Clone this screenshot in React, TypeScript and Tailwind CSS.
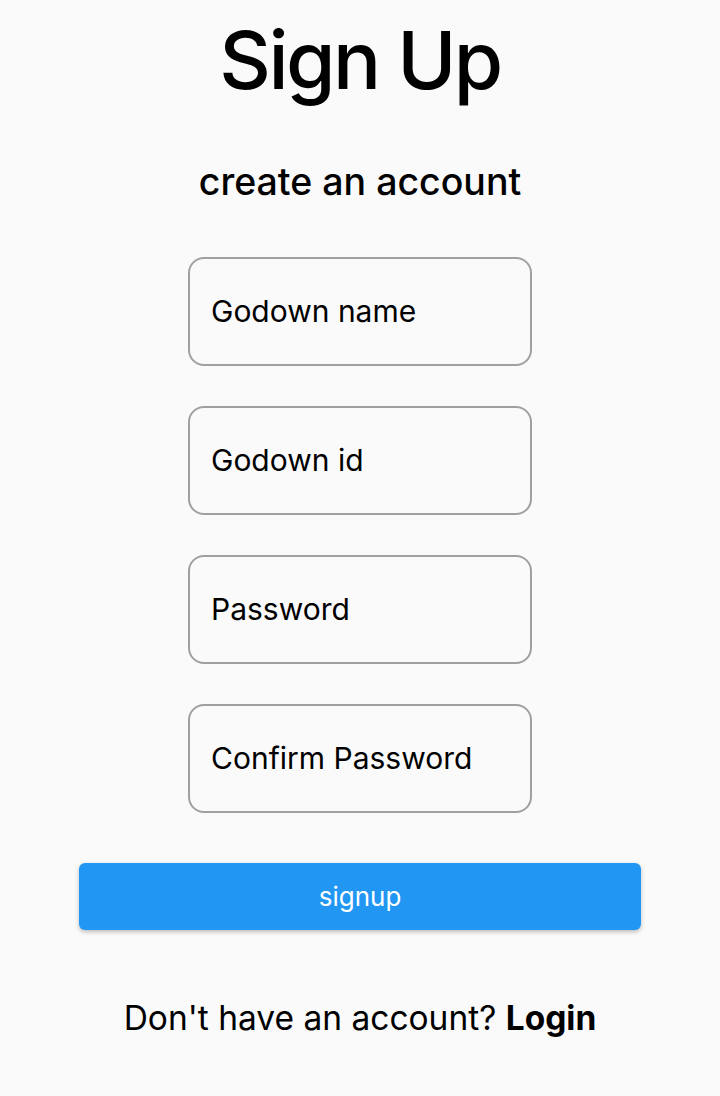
import React from "react";

const fields = ["Godown name", "Godown id", "Password", "Confirm Password"];

export default function App() {
  return (
    <div
      className="w-[720px] h-[1096px] bg-[#fafafa] flex flex-col items-center text-black"
      style={{ fontFamily: "Inter, 'Noto Sans', sans-serif" }}
    >
      <h1 className="mt-[12px] text-[80px] leading-[96px] font-[450] tracking-[-2.6px]">Sign Up</h1>
      <h2 className="mt-[52px] text-[37.5px] leading-[44px] font-medium">create an account</h2>
      <div className="mt-[53px] flex flex-col gap-[40px]">
        {fields.map((f) => (
          <div
            key={f}
            className="w-[344px] h-[109px] border-2 border-[#a0a0a0] rounded-[16px] flex items-center pl-[21px] text-[30px]"
          >
            {f}
          </div>
        ))}
      </div>
      <button className="mt-[50px] w-[562px] h-[67px] bg-[#2196f3] rounded-[6px] text-white text-[26px] shadow-[0_2px_4px_rgba(0,0,0,0.25)]">
        signup
      </button>
      <p className="mt-[64px] text-[33.5px] leading-[48px]">
        Don't have an account? <span className="font-bold">Login</span>
      </p>
    </div>
  );
}
